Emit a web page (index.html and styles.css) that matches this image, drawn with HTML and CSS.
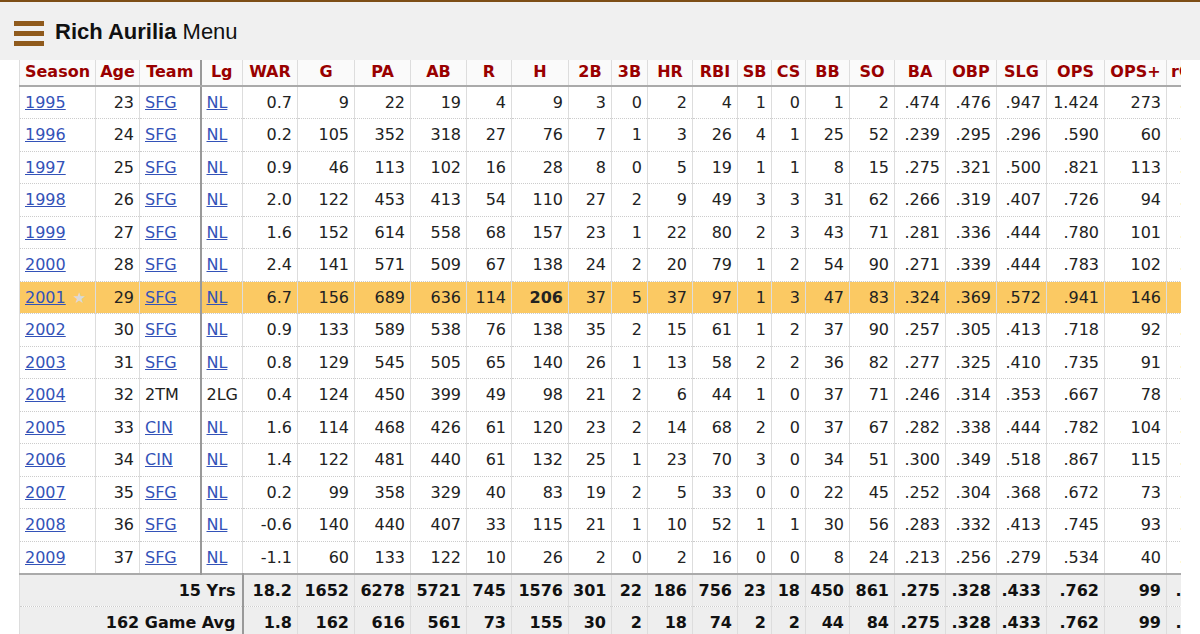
FILE: index.html
```html
<!DOCTYPE html>
<html lang="en">
<head>
<meta charset="utf-8">
<title>Rich Aurilia Stats</title>
<link rel="stylesheet" href="styles.css">
</head>
<body>
<header class="topbar">
  <div class="burger"><span></span><span></span><span></span></div>
  <div class="title"><b>Rich Aurilia</b> Menu</div>
</header>
<div class="wrap">
<table class="stats">
  <colgroup>
    <col class="c-season"><col class="c-age"><col class="c-team"><col class="c-lg"><col class="c-war"><col class="c-g"><col class="c-pa"><col class="c-ab"><col class="c-r"><col class="c-h"><col class="c-2b"><col class="c-3b"><col class="c-hr"><col class="c-rbi"><col class="c-sb"><col class="c-cs"><col class="c-bb"><col class="c-so"><col class="c-ba"><col class="c-obp"><col class="c-slg"><col class="c-ops"><col class="c-opsp"><col class="c-roba">
  </colgroup>
  <thead>
    <tr><th>Season</th><th>Age</th><th class="sep">Team</th><th>Lg</th><th>WAR</th><th>G</th><th>PA</th><th>AB</th><th>R</th><th>H</th><th>2B</th><th>3B</th><th>HR</th><th>RBI</th><th>SB</th><th>CS</th><th>BB</th><th>SO</th><th>BA</th><th>OBP</th><th>SLG</th><th>OPS</th><th>OPS+</th><th class="last">rOBA</th></tr>
  </thead>
  <tbody>
    <tr><td class="l"><a href="#">1995</a></td><td>23</td><td class="l sep"><a href="#">SFG</a></td><td class="l"><a href="#">NL</a></td><td>0.7</td><td>9</td><td>22</td><td>19</td><td>4</td><td>9</td><td>3</td><td>0</td><td>2</td><td>4</td><td>1</td><td>0</td><td>1</td><td>2</td><td>.474</td><td>.476</td><td>.947</td><td>1.424</td><td>273</td><td>.536</td></tr>
    <tr><td class="l"><a href="#">1996</a></td><td>24</td><td class="l sep"><a href="#">SFG</a></td><td class="l"><a href="#">NL</a></td><td>0.2</td><td>105</td><td>352</td><td>318</td><td>27</td><td>76</td><td>7</td><td>1</td><td>3</td><td>26</td><td>4</td><td>1</td><td>25</td><td>52</td><td>.239</td><td>.295</td><td>.296</td><td>.590</td><td>60</td><td>.273</td></tr>
    <tr><td class="l"><a href="#">1997</a></td><td>25</td><td class="l sep"><a href="#">SFG</a></td><td class="l"><a href="#">NL</a></td><td>0.9</td><td>46</td><td>113</td><td>102</td><td>16</td><td>28</td><td>8</td><td>0</td><td>5</td><td>19</td><td>1</td><td>1</td><td>8</td><td>15</td><td>.275</td><td>.321</td><td>.500</td><td>.821</td><td>113</td><td>.359</td></tr>
    <tr><td class="l"><a href="#">1998</a></td><td>26</td><td class="l sep"><a href="#">SFG</a></td><td class="l"><a href="#">NL</a></td><td>2.0</td><td>122</td><td>453</td><td>413</td><td>54</td><td>110</td><td>27</td><td>2</td><td>9</td><td>49</td><td>3</td><td>3</td><td>31</td><td>62</td><td>.266</td><td>.319</td><td>.407</td><td>.726</td><td>94</td><td>.322</td></tr>
    <tr><td class="l"><a href="#">1999</a></td><td>27</td><td class="l sep"><a href="#">SFG</a></td><td class="l"><a href="#">NL</a></td><td>1.6</td><td>152</td><td>614</td><td>558</td><td>68</td><td>157</td><td>23</td><td>1</td><td>22</td><td>80</td><td>2</td><td>3</td><td>43</td><td>71</td><td>.281</td><td>.336</td><td>.444</td><td>.780</td><td>101</td><td>.339</td></tr>
    <tr><td class="l"><a href="#">2000</a></td><td>28</td><td class="l sep"><a href="#">SFG</a></td><td class="l"><a href="#">NL</a></td><td>2.4</td><td>141</td><td>571</td><td>509</td><td>67</td><td>138</td><td>24</td><td>2</td><td>20</td><td>79</td><td>1</td><td>2</td><td>54</td><td>90</td><td>.271</td><td>.339</td><td>.444</td><td>.783</td><td>102</td><td>.342</td></tr>
    <tr class="hl"><td class="l"><a href="#">2001</a> <span class="star">★</span></td><td>29</td><td class="l sep"><a href="#">SFG</a></td><td class="l"><a href="#">NL</a></td><td>6.7</td><td>156</td><td>689</td><td>636</td><td>114</td><td><b>206</b></td><td>37</td><td>5</td><td>37</td><td>97</td><td>1</td><td>3</td><td>47</td><td>83</td><td>.324</td><td>.369</td><td>.572</td><td>.941</td><td>146</td><td>.393</td></tr>
    <tr><td class="l"><a href="#">2002</a></td><td>30</td><td class="l sep"><a href="#">SFG</a></td><td class="l"><a href="#">NL</a></td><td>0.9</td><td>133</td><td>589</td><td>538</td><td>76</td><td>138</td><td>35</td><td>2</td><td>15</td><td>61</td><td>1</td><td>2</td><td>37</td><td>90</td><td>.257</td><td>.305</td><td>.413</td><td>.718</td><td>92</td><td>.314</td></tr>
    <tr><td class="l"><a href="#">2003</a></td><td>31</td><td class="l sep"><a href="#">SFG</a></td><td class="l"><a href="#">NL</a></td><td>0.8</td><td>129</td><td>545</td><td>505</td><td>65</td><td>140</td><td>26</td><td>1</td><td>13</td><td>58</td><td>2</td><td>2</td><td>36</td><td>82</td><td>.277</td><td>.325</td><td>.410</td><td>.735</td><td>91</td><td>.321</td></tr>
    <tr><td class="l"><a href="#">2004</a></td><td>32</td><td class="l sep">2TM</td><td class="l">2LG</td><td>0.4</td><td>124</td><td>450</td><td>399</td><td>49</td><td>98</td><td>21</td><td>2</td><td>6</td><td>44</td><td>1</td><td>0</td><td>37</td><td>71</td><td>.246</td><td>.314</td><td>.353</td><td>.667</td><td>78</td><td>.298</td></tr>
    <tr><td class="l"><a href="#">2005</a></td><td>33</td><td class="l sep"><a href="#">CIN</a></td><td class="l"><a href="#">NL</a></td><td>1.6</td><td>114</td><td>468</td><td>426</td><td>61</td><td>120</td><td>23</td><td>2</td><td>14</td><td>68</td><td>2</td><td>0</td><td>37</td><td>67</td><td>.282</td><td>.338</td><td>.444</td><td>.782</td><td>104</td><td>.337</td></tr>
    <tr><td class="l"><a href="#">2006</a></td><td>34</td><td class="l sep"><a href="#">CIN</a></td><td class="l"><a href="#">NL</a></td><td>1.4</td><td>122</td><td>481</td><td>440</td><td>61</td><td>132</td><td>25</td><td>1</td><td>23</td><td>70</td><td>3</td><td>0</td><td>34</td><td>51</td><td>.300</td><td>.349</td><td>.518</td><td>.867</td><td>115</td><td>.362</td></tr>
    <tr><td class="l"><a href="#">2007</a></td><td>35</td><td class="l sep"><a href="#">SFG</a></td><td class="l"><a href="#">NL</a></td><td>0.2</td><td>99</td><td>358</td><td>329</td><td>40</td><td>83</td><td>19</td><td>2</td><td>5</td><td>33</td><td>0</td><td>0</td><td>22</td><td>45</td><td>.252</td><td>.304</td><td>.368</td><td>.672</td><td>73</td><td>.297</td></tr>
    <tr><td class="l"><a href="#">2008</a></td><td>36</td><td class="l sep"><a href="#">SFG</a></td><td class="l"><a href="#">NL</a></td><td>-0.6</td><td>140</td><td>440</td><td>407</td><td>33</td><td>115</td><td>21</td><td>1</td><td>10</td><td>52</td><td>1</td><td>1</td><td>30</td><td>56</td><td>.283</td><td>.332</td><td>.413</td><td>.745</td><td>93</td><td>.325</td></tr>
    <tr><td class="l"><a href="#">2009</a></td><td>37</td><td class="l sep"><a href="#">SFG</a></td><td class="l"><a href="#">NL</a></td><td>-1.1</td><td>60</td><td>133</td><td>122</td><td>10</td><td>26</td><td>2</td><td>0</td><td>2</td><td>16</td><td>0</td><td>0</td><td>8</td><td>24</td><td>.213</td><td>.256</td><td>.279</td><td>.534</td><td>40</td><td>.243</td></tr>
  </tbody>
  <tfoot>
    <tr><th colspan="4" class="lab">15 Yrs</th><td>18.2</td><td>1652</td><td>6278</td><td>5721</td><td>745</td><td>1576</td><td>301</td><td>22</td><td>186</td><td>756</td><td>23</td><td>18</td><td>450</td><td>861</td><td>.275</td><td>.328</td><td>.433</td><td>.762</td><td>99</td><td>.331</td></tr>
    <tr><th colspan="4" class="lab">162 Game Avg</th><td>1.8</td><td>162</td><td>616</td><td>561</td><td>73</td><td>155</td><td>30</td><td>2</td><td>18</td><td>74</td><td>2</td><td>2</td><td>44</td><td>84</td><td>.275</td><td>.328</td><td>.433</td><td>.762</td><td>99</td><td>.331</td></tr>
  </tfoot>
</table>
</div>
</body>
</html>
```

FILE: styles.css
```css
html, body {
  margin: 0;
  padding: 0;
  background: #fff;
}
body {
  font-family: "DejaVu Sans", Verdana, sans-serif;
  color: #222;
  overflow: hidden;
}
.topbar {
  height: 58px;
  border-top: 2px solid #7d4e16;
  background: #f0f0f0;
  display: flex;
  align-items: center;
  padding-left: 14px;
  gap: 11px;
}
.burger {
  width: 30px;
  display: flex;
  flex-direction: column;
  gap: 5px;
  margin-top: 5px;
}
.burger span {
  display: block;
  height: 5px;
  background: #8f5a1c;
}
.title {
  font-family: "Liberation Sans", Arial, sans-serif;
  font-size: 22px;
  color: #111;
  margin-top: 2px;
}
.title b { font-weight: 700; }

.wrap {
  margin-left: 19px;
  width: 1162px;
  overflow: hidden;
}
.stats {
  border-collapse: collapse;
  table-layout: fixed;
  width: 1201px;
  font-size: 16px;
  border-left: 1px solid #aaa;
}
.c-season { width: 76px; }
.c-age { width: 44px; }
.c-team { width: 61px; }
.c-lg { width: 42px; }
.c-war { width: 55px; }
.c-g { width: 57px; }
.c-pa { width: 56px; }
.c-ab { width: 56px; }
.c-r { width: 45px; }
.c-h { width: 57px; }
.c-2b { width: 43px; }
.c-3b { width: 36px; }
.c-hr { width: 45px; }
.c-rbi { width: 45px; }
.c-sb { width: 34px; }
.c-cs { width: 34px; }
.c-bb { width: 44px; }
.c-so { width: 45px; }
.c-ba { width: 51px; }
.c-obp { width: 51px; }
.c-slg { width: 50px; }
.c-ops { width: 58px; }
.c-opsp { width: 62px; }
.c-roba { width: 54px; }

.stats th, .stats td {
  padding: 0 5px 0 4px;
  white-space: nowrap;
  overflow: hidden;
  border-left: 1px solid #ddd;
  border-right: 1px solid #ddd;
}
.stats thead th {
  height: 26px;
  padding-bottom: 3px;
  box-sizing: border-box;
  color: #990000;
  font-weight: 700;
  text-align: center;
  background: #fafafa;
  border-bottom: 2px solid #aaa;
  padding-left: 2px;
  padding-right: 2px;
}
.stats thead th.last { text-align: left; padding-left: 4px; }
.stats tbody tr { height: 32.5px; }
.stats tbody td {
  text-align: right;
  border-bottom: 1px dotted #ccc;
}
.stats td.l { text-align: left; padding-left: 5px; }
.stats .sep { border-right: 2px solid #999; }
.stats a { color: #3352b8; text-decoration: underline; }
.stats tr.hl td { background: #fbc963; }
.star { color: #d9d9d9; font-size: 15px; margin-left: 2px; }

.stats tfoot tr { height: 32.5px; }
.stats tfoot th, .stats tfoot td {
  background: #eee;
  font-weight: 700;
  text-align: right;
  color: #111;
  border-bottom: 1px dotted #ccc;
}
.stats tfoot tr:first-child th, .stats tfoot tr:first-child td {
  border-top: 2px solid #aaa;
}
.stats tfoot th.lab { border-right: 2px solid #999; padding-right: 6px; }
```
